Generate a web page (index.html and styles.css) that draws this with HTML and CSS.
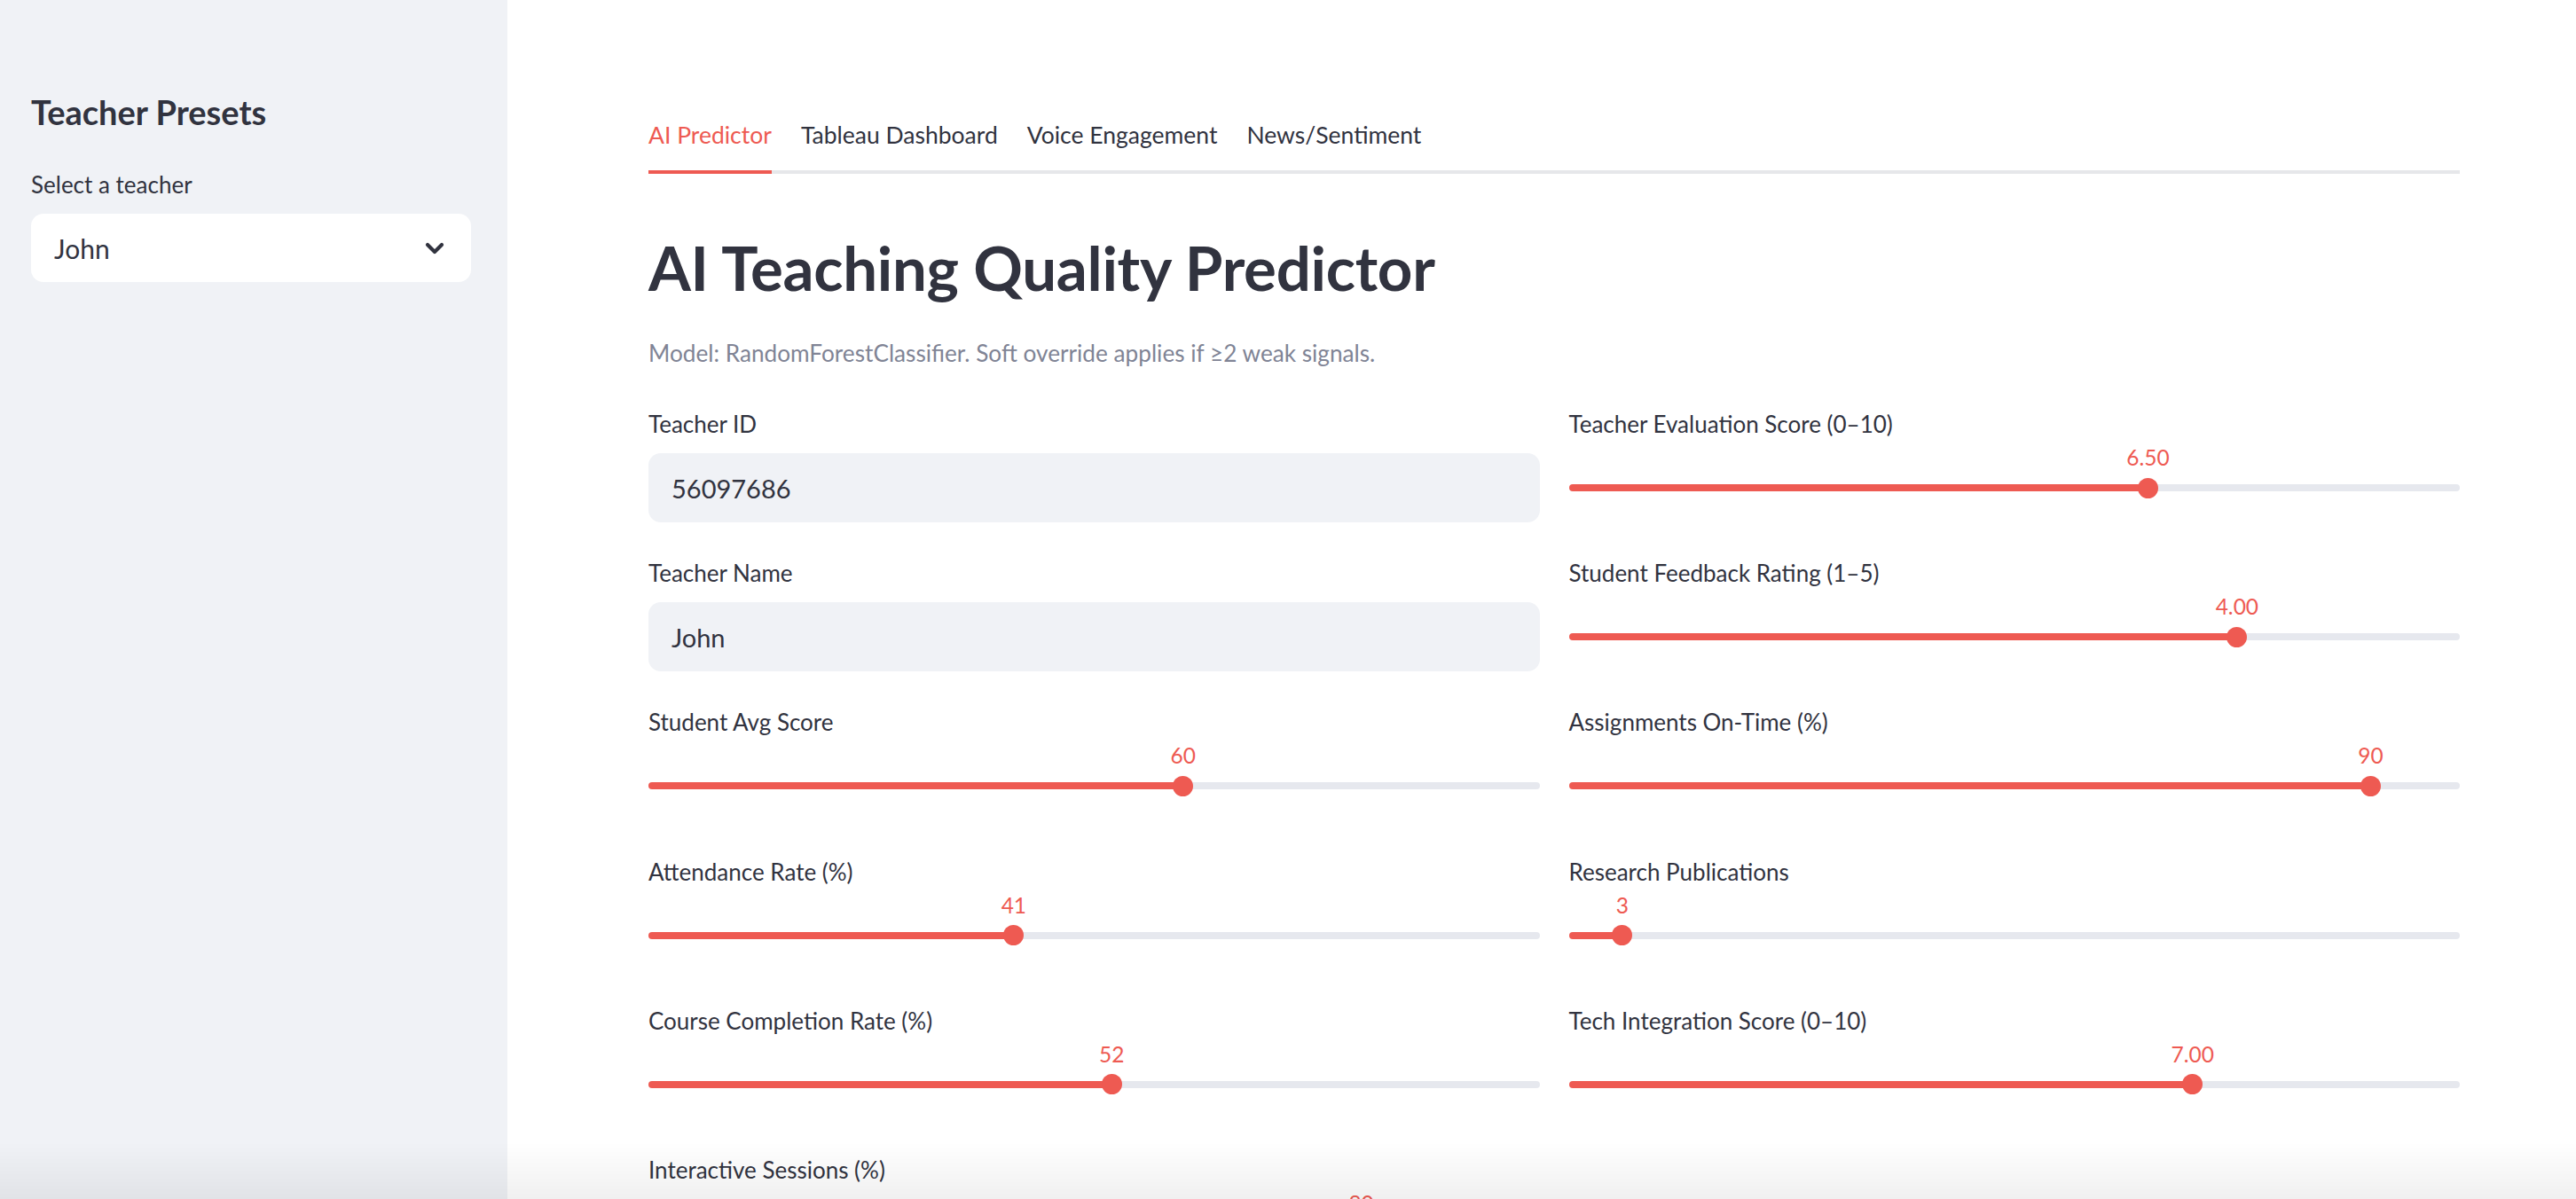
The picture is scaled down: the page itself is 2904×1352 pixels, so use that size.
FILE: index.html
```html
<!DOCTYPE html>
<html lang="en">
<head>
<meta charset="utf-8">
<title>AI Teaching Quality Predictor</title>
<link rel="stylesheet" href="styles.css">
</head>
<body>
<div class="app">
  <aside class="sidebar">
    <h2 class="side-title">Teacher Presets</h2>
    <div class="side-label">Select a teacher</div>
    <div class="select">
      <span class="select-value">John</span>
      <svg class="chevron" viewBox="0 0 22 14" width="22" height="14"><polyline points="3,3 11,11 19,3" fill="none" stroke="#31333f" stroke-width="4.2" stroke-linejoin="round" stroke-linecap="round"/></svg>
    </div>
  </aside>
  <main class="main">
    <div class="container">
      <nav class="tabs">
        <div class="tab active">AI Predictor</div>
        <div class="tab">Tableau Dashboard</div>
        <div class="tab">Voice Engagement</div>
        <div class="tab">News/Sentiment</div>
      </nav>
      <h1 class="title">AI Teaching Quality Predictor</h1>
      <p class="caption">Model: RandomForestClassifier. Soft override applies if ≥2 weak signals.</p>
      <div class="columns">
        <div class="col">
          <div class="widget">
            <div class="label">Teacher ID</div>
            <div class="input">56097686</div>
          </div>
          <div class="widget">
            <div class="label">Teacher Name</div>
            <div class="input">John</div>
          </div>
          <div class="widget">
            <div class="label">Student Avg Score</div>
            <div class="slider" style="--p:60%"><div class="track"></div><div class="thumb"></div><div class="value">60</div></div>
          </div>
          <div class="widget">
            <div class="label">Attendance Rate (%)</div>
            <div class="slider" style="--p:41%"><div class="track"></div><div class="thumb"></div><div class="value">41</div></div>
          </div>
          <div class="widget">
            <div class="label">Course Completion Rate (%)</div>
            <div class="slider" style="--p:52%"><div class="track"></div><div class="thumb"></div><div class="value">52</div></div>
          </div>
          <div class="widget">
            <div class="label">Interactive Sessions (%)</div>
            <div class="slider" style="--p:80%"><div class="track"></div><div class="thumb"></div><div class="value">80</div></div>
          </div>
        </div>
        <div class="col">
          <div class="widget">
            <div class="label">Teacher Evaluation Score (0–10)</div>
            <div class="slider" style="--p:65%"><div class="track"></div><div class="thumb"></div><div class="value">6.50</div></div>
          </div>
          <div class="widget">
            <div class="label">Student Feedback Rating (1–5)</div>
            <div class="slider" style="--p:75%"><div class="track"></div><div class="thumb"></div><div class="value">4.00</div></div>
          </div>
          <div class="widget">
            <div class="label">Assignments On-Time (%)</div>
            <div class="slider" style="--p:90%"><div class="track"></div><div class="thumb"></div><div class="value">90</div></div>
          </div>
          <div class="widget">
            <div class="label">Research Publications</div>
            <div class="slider" style="--p:6%"><div class="track"></div><div class="thumb"></div><div class="value">3</div></div>
          </div>
          <div class="widget">
            <div class="label">Tech Integration Score (0–10)</div>
            <div class="slider" style="--p:70%"><div class="track"></div><div class="thumb"></div><div class="value">7.00</div></div>
          </div>
        </div>
      </div>
    </div>
  </main>
</div>
<div class="bottom-fade"></div>
</body>
</html>
```

FILE: styles.css
```css
* { box-sizing: border-box; }
html, body {
  margin: 0;
  padding: 0;
  height: 100%;
  overflow: hidden;
  background: #ffffff;
  font-family: Lato, "Noto Sans", sans-serif;
  color: #31333f;
}
.app {
  display: flex;
  height: 1352px;
}
.sidebar {
  width: 572px;
  flex: 0 0 572px;
  background: #f0f2f6;
  padding: 104px 41px 0 35px;
}
.side-title {
  margin: 0;
  font-size: 38px;
  line-height: 44px;
  font-weight: 700;
}
.side-label {
  margin-top: 44px;
  font-size: 26px;
  line-height: 32px;
}
.select {
  margin-top: 17px;
  height: 77px;
  background: #ffffff;
  border-radius: 14px;
  display: flex;
  align-items: center;
  justify-content: space-between;
  padding: 0 30px 0 26px;
}
.select-value {
  font-size: 30px;
}
.chevron { display: block; }
.main {
  flex: 1;
  background: #ffffff;
}
.container {
  width: 2042px;
  margin-left: 159px;
  padding-top: 132px;
}
.tabs {
  display: flex;
  gap: 33px;
  border-bottom: 4px solid #e6e7ea;
}
.tab {
  font-size: 26.5px;
  line-height: 40px;
  padding-bottom: 20px;
  margin-bottom: -4px;
  border-bottom: 4px solid transparent;
}
.tab.active {
  color: #ee5a52;
  border-bottom-color: #ee5a52;
}
.title {
  margin: 56px 0 0;
  font-size: 69px;
  line-height: 100px;
  font-weight: 700;
  letter-spacing: -0.3px;
}
.caption {
  margin: 26px 0 0;
  font-size: 26.2px;
  line-height: 40px;
  color: #808495;
}
.columns {
  display: flex;
  gap: 33px;
  margin-top: 38px;
}
.col {
  flex: 1;
  display: flex;
  flex-direction: column;
  gap: 35.2px;
}
.label {
  font-size: 26px;
  line-height: 44px;
  margin-bottom: 11px;
}
.input {
  height: 78px;
  background: #f0f2f6;
  border-radius: 14px;
  display: flex;
  align-items: center;
  padding-left: 26px;
  font-size: 29px;
}
.slider {
  position: relative;
  height: 78px;
  display: flex;
  align-items: center;
}
.track {
  flex: 1;
  height: 8px;
  border-radius: 4px;
  background: linear-gradient(to right, #ee5a52 var(--p), #e6e8ee var(--p));
}
.thumb {
  position: absolute;
  left: var(--p);
  top: 27.5px;
  width: 23px;
  height: 23px;
  margin-left: -11.5px;
  border-radius: 50%;
  background: #ee5a52;
}
.value {
  position: absolute;
  left: var(--p);
  top: -11px;
  transform: translateX(-50%);
  font-size: 24.5px;
  line-height: 32px;
  color: #ee5a52;
  white-space: nowrap;
}
.bottom-fade {
  position: fixed;
  left: 0;
  right: 0;
  bottom: 0;
  height: 64px;
  background: linear-gradient(to bottom, rgba(0,0,0,0), rgba(0,0,0,0.06));
  pointer-events: none;
}
```
